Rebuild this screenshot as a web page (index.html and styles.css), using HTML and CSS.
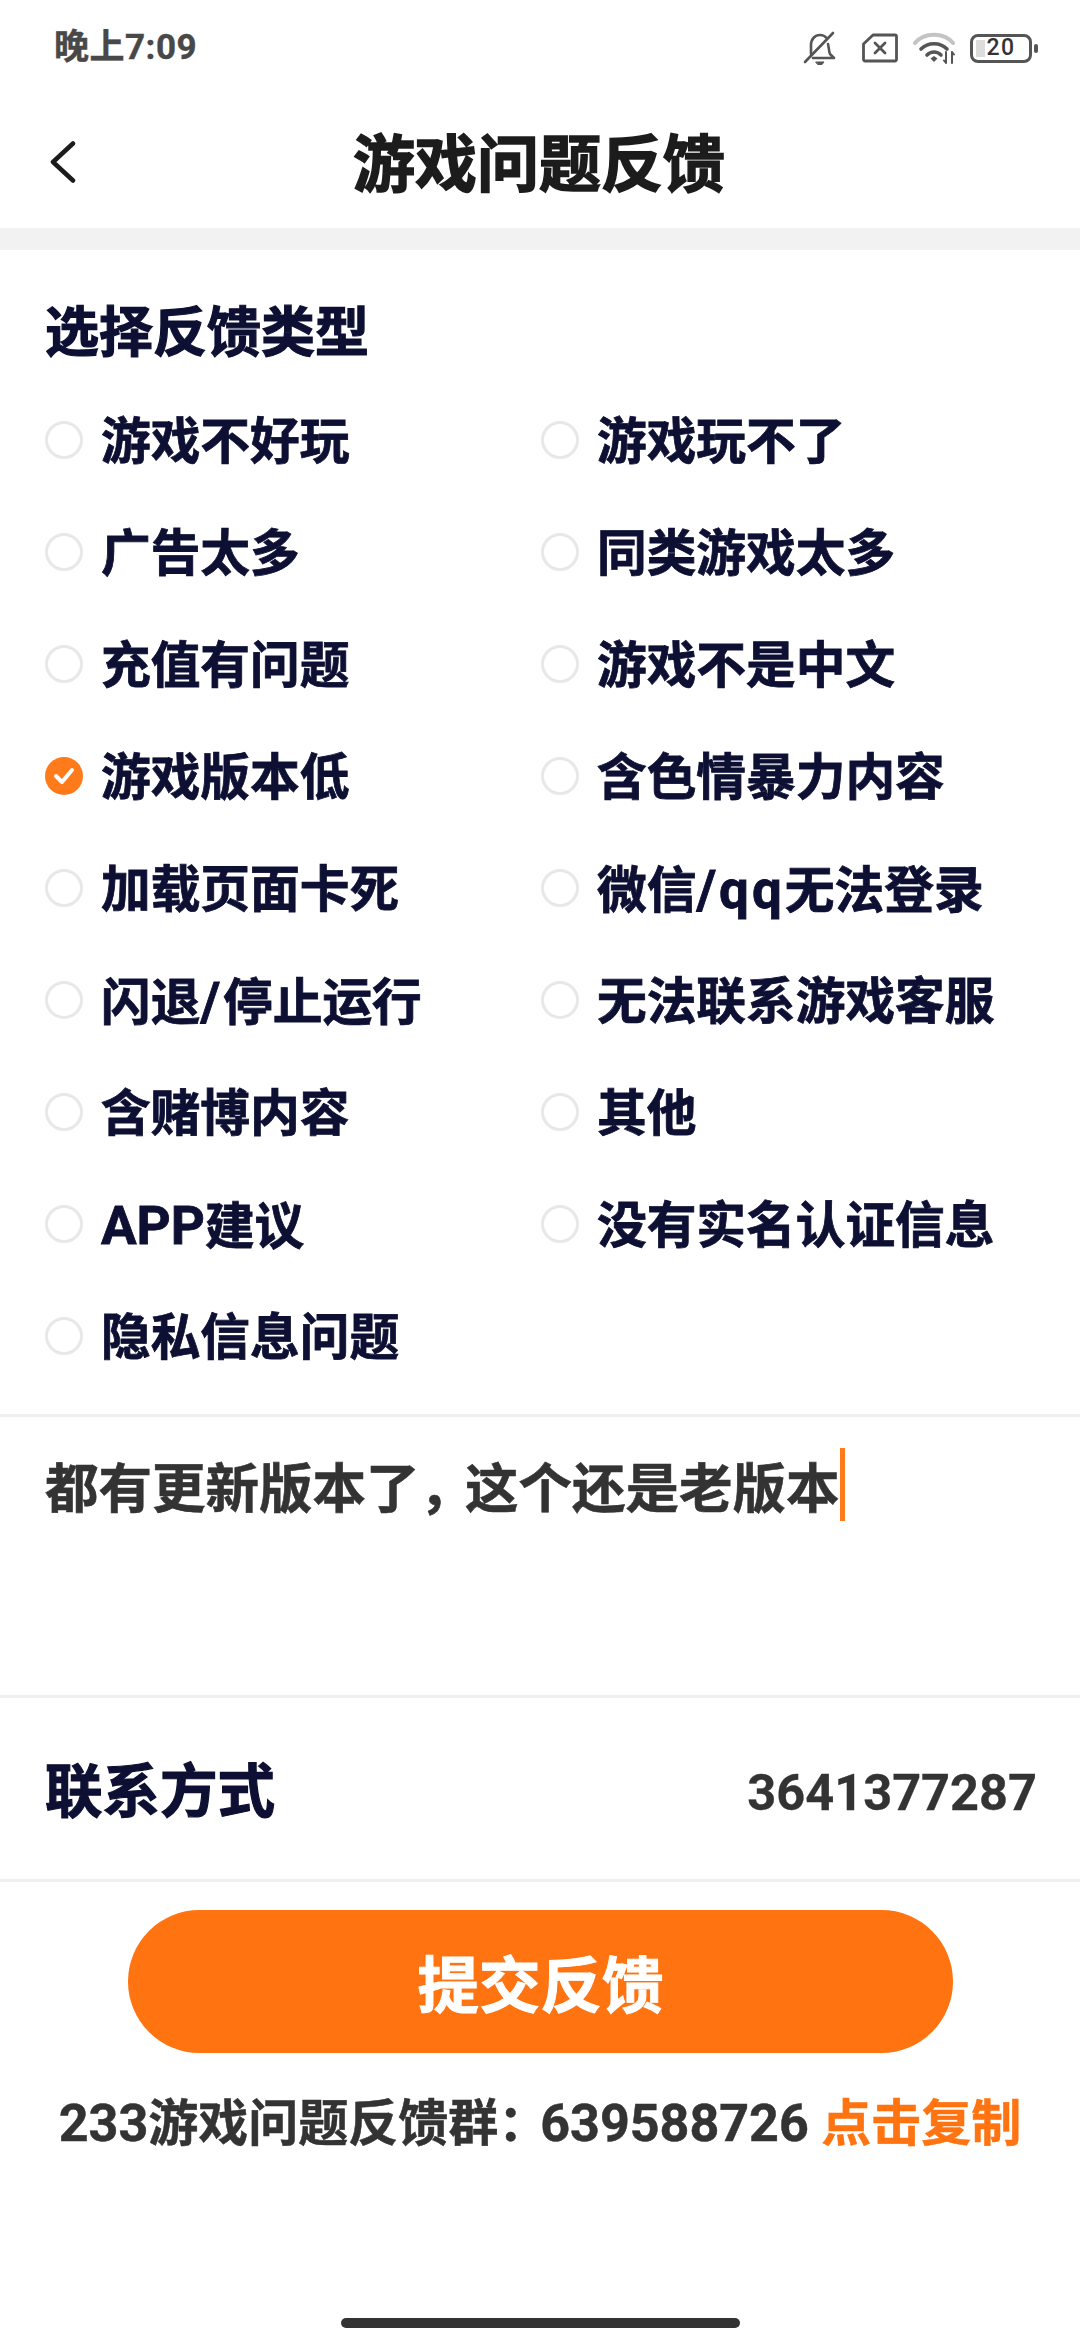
FILE: index.html
```html
<!DOCTYPE html>
<html lang="zh-CN">
<head>
<meta charset="utf-8">
<title>游戏问题反馈</title>
<link rel="stylesheet" href="styles.css">
</head>
<body>
<div class="app">
  <div class="status">
    <span class="time">晚上7:09</span>
    <div class="status-icons">
      <svg class="i-bell" width="34" height="34" viewBox="0 0 34 34" fill="none" stroke="#555" stroke-width="2.6" stroke-linecap="round" stroke-linejoin="round">
        <path d="M8 23V14C8 8 12 4 17 4c3 0 5 1 6.500 3"/>
        <path d="M25 13c1 4 1 8 2 10l4 4H10"/>
        <path d="M2 31L30 2"/>
        <path d="M13 31h8l-2 2.500h-4z" fill="#555" stroke-width="1"/>
      </svg>
      <svg class="i-sim" width="36" height="30" viewBox="0 0 36 30" fill="none" stroke="#555" stroke-width="2.800" stroke-linejoin="round" stroke-linecap="round">
        <path d="M11 2h22a1.500 1.500 0 0 1 1.500 1.500v23a1.500 1.500 0 0 1-1.500 1.500H3a1.500 1.500 0 0 1-1.500-1.500V11z"/>
        <path d="M13 10l10 10M23 10L13 20"/>
      </svg>
      <svg class="i-wifi" width="44" height="32" viewBox="0 0 44 32" fill="none" stroke-linecap="round">
        <path d="M2 11C11 0 31 0 40 11" stroke="#c4c4c4" stroke-width="4"/>
        <path d="M8 17C15 10 27 10 34 17" stroke="#555" stroke-width="3.600"/>
        <path d="M14 23C18 19 24 19 28 23" stroke="#555" stroke-width="3.600"/>
        <path d="M17.500 26.500l3.500-2.500 3.500 2.500-3.500 3.500z" fill="#555"/>
        <path d="M33 20v11M31 28.500l2 2.500M39 20v11M39 20l2 2.500" stroke="#555" stroke-width="2"/>
      </svg>
      <div class="battery">
        <div class="battery-body"><span class="battery-fill"></span><span class="battery-num">20</span></div>
        <span class="battery-tip"></span>
      </div>
    </div>
  </div>

  <header class="nav">
    <svg class="back" width="26" height="42" viewBox="0 0 26 42" fill="none" stroke="#1c1c1c" stroke-width="4.500" stroke-linecap="round" stroke-linejoin="round">
      <path d="M23 2.500L3 21l20 18.500"/>
    </svg>
    <h1 class="nav-title">游戏问题反馈</h1>
  </header>
  <div class="band"></div>

  <h2 class="section-title">选择反馈类型</h2>
  <div class="options">
    <div class="opt"><span class="radio"></span><span>游戏不好玩</span></div>
    <div class="opt"><span class="radio"></span><span>游戏玩不了</span></div>
    <div class="opt"><span class="radio"></span><span>广告太多</span></div>
    <div class="opt"><span class="radio"></span><span>同类游戏太多</span></div>
    <div class="opt"><span class="radio"></span><span>充值有问题</span></div>
    <div class="opt"><span class="radio"></span><span>游戏不是中文</span></div>
    <div class="opt"><span class="radio radio-on"><svg width="22" height="18" viewBox="0 0 22 18" fill="none" stroke="#fff" stroke-width="4" stroke-linecap="round" stroke-linejoin="round"><path d="M3 9l6 6L19 3"/></svg></span><span>游戏版本低</span></div>
    <div class="opt"><span class="radio"></span><span>含色情暴力内容</span></div>
    <div class="opt"><span class="radio"></span><span>加载页面卡死</span></div>
    <div class="opt"><span class="radio"></span><span>微信<span class="lat lat-wide">/qq</span>无法登录</span></div>
    <div class="opt"><span class="radio"></span><span>闪退<span class="lat lat-wide">/</span>停止运行</span></div>
    <div class="opt"><span class="radio"></span><span>无法联系游戏客服</span></div>
    <div class="opt"><span class="radio"></span><span>含赌博内容</span></div>
    <div class="opt"><span class="radio"></span><span>其他</span></div>
    <div class="opt"><span class="radio"></span><span><span class="lat">APP</span>建议</span></div>
    <div class="opt"><span class="radio"></span><span>没有实名认证信息</span></div>
    <div class="opt"><span class="radio"></span><span>隐私信息问题</span></div>
  </div>

  <div class="input-box">
    <span class="input-text">都有更新版本了<span class="comma">，</span>这个还是老版本</span><span class="caret"></span>
  </div>

  <div class="contact">
    <span class="contact-label">联系方式</span>
    <span class="contact-value">3641377287</span>
  </div>

  <button class="submit">提交反馈</button>
  <p class="group"><span class="num">233</span>游戏问题反馈群<span class="colon">：</span><span class="num">639588726</span> <span class="copy">点击复制</span></p>

  <div class="home-wrap"><div class="home-bar"></div></div>
</div>
</body>
</html>
```

FILE: styles.css
```css
* { box-sizing: border-box; }

html, body {
  margin: 0;
  padding: 0;
  background: #fff;
}

.app {
  width: 1080px;
  height: 2340px;
  overflow: hidden;
  display: flex;
  flex-direction: column;
  font-family: Roboto, "Noto Sans CJK SC", sans-serif;
  font-weight: 700;
}

/* status bar */
.status {
  height: 96px;
  flex: none;
  display: flex;
  align-items: center;
  justify-content: space-between;
  padding: 0 42px 0 54px;
}
.time {
  font-size: 35px;
  line-height: 40px;
  letter-spacing: 0.5px;
  color: #484848;
  -webkit-text-stroke: 0.4px #484848;
}
.status-icons {
  display: flex;
  align-items: center;
  gap: 20px;
}
.i-sim { margin-left: 5px; }
.i-wifi { margin-left: -5px; }
.battery {
  display: flex;
  align-items: center;
  gap: 2px;
  margin-left: -7px;
}
.battery-body {
  position: relative;
  width: 62px;
  height: 29px;
  border: 3.5px solid #555;
  border-radius: 8px;
  display: flex;
  align-items: center;
  justify-content: center;
}
.battery-fill {
  position: absolute;
  left: 3px;
  top: 3px;
  bottom: 3px;
  width: 9px;
  background: #dcdcdc;
}
.battery-num {
  position: relative;
  font-size: 23px;
  line-height: 22px;
  letter-spacing: 1.5px;
  font-weight: 500;
  color: #333;
}
.battery-tip {
  width: 4px;
  height: 9px;
  border-radius: 2px;
  background: #555;
}

/* navigation */
.nav {
  position: relative;
  height: 132px;
  flex: none;
  display: flex;
  align-items: center;
  justify-content: center;
}
.back {
  position: absolute;
  left: 50px;
  top: 45px;
}
.nav-title {
  margin: 8px 2px 0 0;
  font-size: 62px;
  line-height: 80px;
  font-weight: 700;
  color: #1c1c1c;
  -webkit-text-stroke: 1.5px #1c1c1c;
}
.band {
  height: 22px;
  flex: none;
  background: #f2f2f2;
}

/* feedback types */
.section-title {
  margin: 0;
  height: 135px;
  padding: 49px 0 0 45px;
  font-size: 54px;
  line-height: 70px;
  font-weight: 700;
  color: #0d1033;
  -webkit-text-stroke: 1.2px #0d1033;
}
.options {
  display: grid;
  grid-template-columns: 496px 1fr;
  grid-auto-rows: 112px;
  padding-left: 45px;
  flex: none;
}
.opt {
  display: flex;
  align-items: center;
  gap: 18px;
  padding-top: 2px;
  font-size: 49.700px;
  line-height: 60px;
  color: #0d1033;
  -webkit-text-stroke: 0.8px #0d1033;
}
.lat { font-size: 53px; }
.lat-wide { letter-spacing: 3px; }
.radio {
  width: 38px;
  height: 38px;
  flex: none;
  margin-top: -4px;
  border: 3px solid #e8e8e8;
  border-radius: 50%;
  display: flex;
  align-items: center;
  justify-content: center;
  -webkit-text-stroke: 0;
}
.radio-on {
  background: #ff7a1a;
  border: none;
}

/* free text */
.input-box {
  height: 284px;
  flex: none;
  margin-top: 21px;
  padding: 31px 0 0 45px;
  border-top: 3px solid #f0f0f0;
  border-bottom: 3px solid #f0f0f0;
  display: flex;
  align-items: flex-start;
}
.input-text {
  font-size: 53.500px;
  line-height: 73px;
  color: #333;
  white-space: nowrap;
  -webkit-text-stroke: 0.6px #333;
}
.comma {
  font-family: "Noto Sans CJK TC", sans-serif;
  letter-spacing: -8px;
}
.caret {
  width: 5px;
  height: 73px;
  flex: none;
  background: #ff7a1a;
}

/* contact row */
.contact {
  height: 184px;
  flex: none;
  padding: 8px 43px 0 45px;
  border-bottom: 3px solid #f0f0f0;
  display: flex;
  align-items: center;
  justify-content: space-between;
}
.contact-label {
  font-size: 57.500px;
  line-height: 70px;
  font-weight: 700;
  color: #0d1033;
  -webkit-text-stroke: 1.2px #0d1033;
}
.contact-value {
  font-size: 50.500px;
  line-height: 70px;
  color: #333;
  -webkit-text-stroke: 0.3px #333;
}

/* submit */
.submit {
  display: block;
  width: 825px;
  height: 143px;
  flex: none;
  margin: 28px 0 0 128px;
  padding: 0;
  border: none;
  border-radius: 72px;
  background: #ff7310;
  color: #fff;
  font-family: inherit;
  font-size: 61.500px;
  font-weight: 700;
  -webkit-text-stroke: 1px #fff;
}
.group {
  margin: 36px 0 0;
  text-align: center;
  font-size: 50px;
  line-height: 60px;
  color: #333;
  white-space: nowrap;
  -webkit-text-stroke: 0.5px #333;
}
.num { font-size: 52px; }
.colon {
  font-family: "Noto Sans CJK TC", sans-serif;
  letter-spacing: -8px;
}
.copy {
  color: #ff7310;
  -webkit-text-stroke: 0.5px #ff7310;
}

/* gesture bar */
.home-wrap {
  flex: 1;
  display: flex;
  align-items: flex-end;
  justify-content: center;
  padding-bottom: 12px;
}
.home-bar {
  width: 399px;
  height: 10px;
  border-radius: 5px;
  background: #333;
}
```
